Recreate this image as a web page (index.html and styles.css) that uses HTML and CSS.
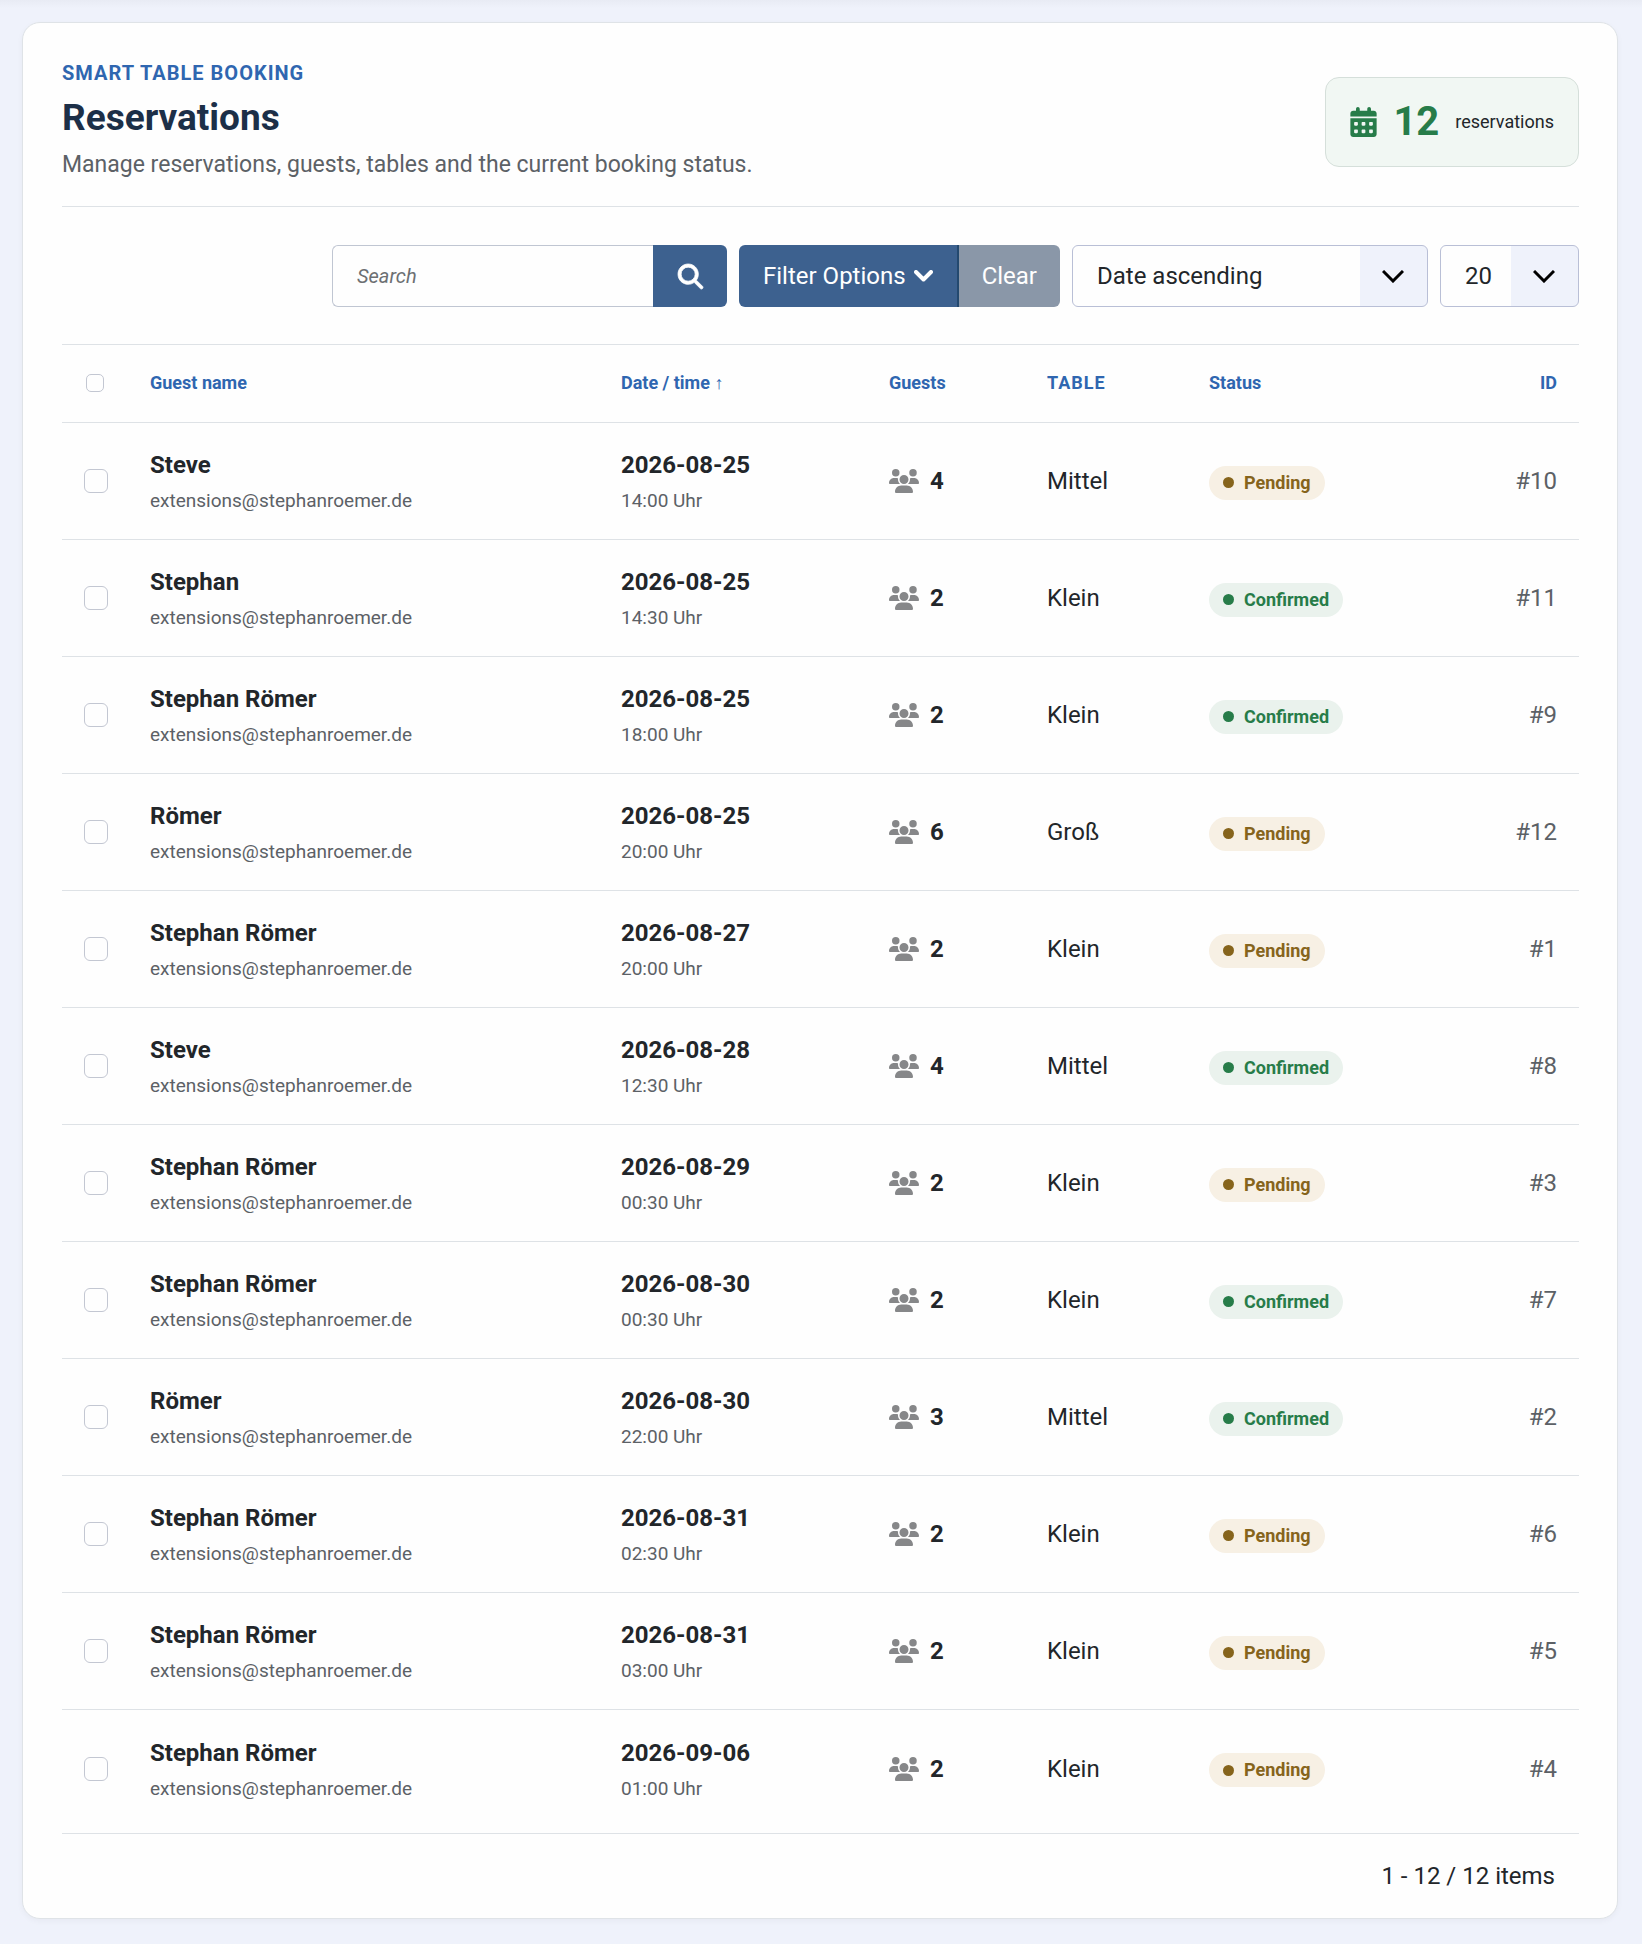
FILE: index.html
```html
<!DOCTYPE html>
<html lang="en">
<head>
<meta charset="UTF-8" />
<meta name="viewport" content="width=device-width, initial-scale=1" />
<title>Smart Table Booking - Reservations</title>
<link rel="stylesheet" href="styles.css">
</head>
<body>
<svg class="sprite" aria-hidden="true">
  <symbol id="icon-users" viewBox="0 0 640 512">
    <path d="M144 0a80 80 0 1 1 0 160A80 80 0 1 1 144 0zM512 0a80 80 0 1 1 0 160A80 80 0 1 1 512 0zM0 298.7C0 239.8 47.8 192 106.7 192h42.7c15.9 0 31 3.5 44.6 9.7c-1.3 7.2-1.9 14.7-1.9 22.3c0 38.2 16.8 72.5 43.3 96c-.2 0-.4 0-.7 0H21.3C9.6 320 0 310.4 0 298.7zM405.3 320c-.2 0-.4 0-.7 0c26.6-23.5 43.3-57.8 43.3-96c0-7.6-.7-15-1.9-22.3c13.6-6.3 28.7-9.7 44.6-9.7h42.7C592.2 192 640 239.8 640 298.7c0 11.8-9.6 21.3-21.3 21.3H405.3zM224 224a96 96 0 1 1 192 0 96 96 0 1 1 -192 0zM128 485.3C128 411.7 187.7 352 261.3 352H378.7C452.3 352 512 411.7 512 485.3c0 14.7-11.9 26.7-26.7 26.7H154.7c-14.7 0-26.7-11.9-26.7-26.7z"/>
  </symbol>
</svg>

<main class="card">
  <header class="page-head">
    <div>
      <p class="eyebrow">Smart Table Booking</p>
      <h1>Reservations</h1>
      <p class="lead">Manage reservations, guests, tables and the current booking status.</p>
    </div>
    <div class="total">
      <svg class="total-icon" viewBox="0 0 448 512" aria-hidden="true"><path d="M128 0c17.7 0 32 14.3 32 32V64H288V32c0-17.7 14.3-32 32-32s32 14.3 32 32V64h48c26.5 0 48 21.5 48 48v48H0V112C0 85.5 21.5 64 48 64H96V32c0-17.7 14.3-32 32-32zM0 192H448V464c0 26.5-21.5 48-48 48H48c-26.5 0-48-21.5-48-48V192zm64 80v32c0 8.8 7.2 16 16 16h32c8.8 0 16-7.2 16-16V272c0-8.8-7.2-16-16-16H80c-8.8 0-16 7.2-16 16zm128 0v32c0 8.8 7.2 16 16 16h32c8.8 0 16-7.2 16-16V272c0-8.8-7.2-16-16-16H208c-8.8 0-16 7.2-16 16zm144-16c-8.8 0-16 7.2-16 16v32c0 8.8 7.2 16 16 16h32c8.8 0 16-7.2 16-16V272c0-8.8-7.2-16-16-16H336zM64 400v32c0 8.8 7.2 16 16 16h32c8.8 0 16-7.2 16-16V400c0-8.8-7.2-16-16-16H80c-8.8 0-16 7.2-16 16zm144-16c-8.8 0-16 7.2-16 16v32c0 8.8 7.2 16 16 16h32c8.8 0 16-7.2 16-16V400c0-8.8-7.2-16-16-16H208zm112 16v32c0 8.8 7.2 16 16 16h32c8.8 0 16-7.2 16-16V400c0-8.8-7.2-16-16-16H336c-8.8 0-16 7.2-16 16z"/></svg>
      <strong>12</strong>
      <span>reservations</span>
    </div>
  </header>

  <form class="toolbar">
    <div class="group">
      <input class="search" type="text" placeholder="Search" aria-label="Search">
      <button class="btn search-btn" type="submit" aria-label="Search">
        <svg class="search-icon" viewBox="0 0 512 512" aria-hidden="true"><path d="M416 208c0 45.9-14.9 88.3-40 122.7L502.6 457.4c12.5 12.5 12.5 32.8 0 45.3s-32.8 12.5-45.3 0L330.7 376c-34.4 25.2-76.8 40-122.7 40C93.1 416 0 322.9 0 208S93.1 0 208 0S416 93.1 416 208zM208 352a144 144 0 1 0 0-288 144 144 0 1 0 0 288z"/></svg>
      </button>
    </div>
    <div class="group">
      <button class="btn filter-btn" type="button">Filter Options
        <svg class="caret" viewBox="0 0 19 12" aria-hidden="true"><path d="M2 2l7.5 7.5L17 2"/></svg>
      </button>
      <button class="btn clear-btn" type="button">Clear</button>
    </div>
    <select class="select sort" aria-label="Sort by">
      <option>Date ascending</option>
      <option>Date descending</option>
    </select>
    <select class="select limit" aria-label="Items per page">
      <option>20</option>
      <option>50</option>
    </select>
  </form>

  <table class="bookings">
    <colgroup>
      <col class="col-check">
      <col>
      <col class="col-date">
      <col class="col-guests">
      <col class="col-table">
      <col class="col-status">
      <col class="col-id">
    </colgroup>
    <thead>
      <tr>
        <th><input class="check check-all" type="checkbox" aria-label="Select all"></th>
        <th><a href="#">Guest name</a></th>
        <th><a href="#">Date / time <span class="arrow">↑</span></a></th>
        <th><a href="#">Guests</a></th>
        <th class="upper">Table</th>
        <th><a href="#">Status</a></th>
        <th class="id"><a href="#">ID</a></th>
      </tr>
    </thead>
    <tbody>
      <tr>
        <td><input class="check" type="checkbox" aria-label="Select 10"></td>
        <td><div class="main">Steve</div><div class="sub">extensions@stephanroemer.de</div></td>
        <td><div class="main">2026-08-25</div><div class="sub">14:00 Uhr</div></td>
        <td><div class="guests"><svg><use href="#icon-users"/></svg>4</div></td>
        <td>Mittel</td>
        <td><span class="badge pending">Pending</span></td>
        <td class="id">#10</td>
      </tr>
      <tr>
        <td><input class="check" type="checkbox" aria-label="Select 11"></td>
        <td><div class="main">Stephan</div><div class="sub">extensions@stephanroemer.de</div></td>
        <td><div class="main">2026-08-25</div><div class="sub">14:30 Uhr</div></td>
        <td><div class="guests"><svg><use href="#icon-users"/></svg>2</div></td>
        <td>Klein</td>
        <td><span class="badge confirmed">Confirmed</span></td>
        <td class="id">#11</td>
      </tr>
      <tr>
        <td><input class="check" type="checkbox" aria-label="Select 9"></td>
        <td><div class="main">Stephan Römer</div><div class="sub">extensions@stephanroemer.de</div></td>
        <td><div class="main">2026-08-25</div><div class="sub">18:00 Uhr</div></td>
        <td><div class="guests"><svg><use href="#icon-users"/></svg>2</div></td>
        <td>Klein</td>
        <td><span class="badge confirmed">Confirmed</span></td>
        <td class="id">#9</td>
      </tr>
      <tr>
        <td><input class="check" type="checkbox" aria-label="Select 12"></td>
        <td><div class="main">Römer</div><div class="sub">extensions@stephanroemer.de</div></td>
        <td><div class="main">2026-08-25</div><div class="sub">20:00 Uhr</div></td>
        <td><div class="guests"><svg><use href="#icon-users"/></svg>6</div></td>
        <td>Groß</td>
        <td><span class="badge pending">Pending</span></td>
        <td class="id">#12</td>
      </tr>
      <tr>
        <td><input class="check" type="checkbox" aria-label="Select 1"></td>
        <td><div class="main">Stephan Römer</div><div class="sub">extensions@stephanroemer.de</div></td>
        <td><div class="main">2026-08-27</div><div class="sub">20:00 Uhr</div></td>
        <td><div class="guests"><svg><use href="#icon-users"/></svg>2</div></td>
        <td>Klein</td>
        <td><span class="badge pending">Pending</span></td>
        <td class="id">#1</td>
      </tr>
      <tr>
        <td><input class="check" type="checkbox" aria-label="Select 8"></td>
        <td><div class="main">Steve</div><div class="sub">extensions@stephanroemer.de</div></td>
        <td><div class="main">2026-08-28</div><div class="sub">12:30 Uhr</div></td>
        <td><div class="guests"><svg><use href="#icon-users"/></svg>4</div></td>
        <td>Mittel</td>
        <td><span class="badge confirmed">Confirmed</span></td>
        <td class="id">#8</td>
      </tr>
      <tr>
        <td><input class="check" type="checkbox" aria-label="Select 3"></td>
        <td><div class="main">Stephan Römer</div><div class="sub">extensions@stephanroemer.de</div></td>
        <td><div class="main">2026-08-29</div><div class="sub">00:30 Uhr</div></td>
        <td><div class="guests"><svg><use href="#icon-users"/></svg>2</div></td>
        <td>Klein</td>
        <td><span class="badge pending">Pending</span></td>
        <td class="id">#3</td>
      </tr>
      <tr>
        <td><input class="check" type="checkbox" aria-label="Select 7"></td>
        <td><div class="main">Stephan Römer</div><div class="sub">extensions@stephanroemer.de</div></td>
        <td><div class="main">2026-08-30</div><div class="sub">00:30 Uhr</div></td>
        <td><div class="guests"><svg><use href="#icon-users"/></svg>2</div></td>
        <td>Klein</td>
        <td><span class="badge confirmed">Confirmed</span></td>
        <td class="id">#7</td>
      </tr>
      <tr>
        <td><input class="check" type="checkbox" aria-label="Select 2"></td>
        <td><div class="main">Römer</div><div class="sub">extensions@stephanroemer.de</div></td>
        <td><div class="main">2026-08-30</div><div class="sub">22:00 Uhr</div></td>
        <td><div class="guests"><svg><use href="#icon-users"/></svg>3</div></td>
        <td>Mittel</td>
        <td><span class="badge confirmed">Confirmed</span></td>
        <td class="id">#2</td>
      </tr>
      <tr>
        <td><input class="check" type="checkbox" aria-label="Select 6"></td>
        <td><div class="main">Stephan Römer</div><div class="sub">extensions@stephanroemer.de</div></td>
        <td><div class="main">2026-08-31</div><div class="sub">02:30 Uhr</div></td>
        <td><div class="guests"><svg><use href="#icon-users"/></svg>2</div></td>
        <td>Klein</td>
        <td><span class="badge pending">Pending</span></td>
        <td class="id">#6</td>
      </tr>
      <tr>
        <td><input class="check" type="checkbox" aria-label="Select 5"></td>
        <td><div class="main">Stephan Römer</div><div class="sub">extensions@stephanroemer.de</div></td>
        <td><div class="main">2026-08-31</div><div class="sub">03:00 Uhr</div></td>
        <td><div class="guests"><svg><use href="#icon-users"/></svg>2</div></td>
        <td>Klein</td>
        <td><span class="badge pending">Pending</span></td>
        <td class="id">#5</td>
      </tr>
      <tr>
        <td><input class="check" type="checkbox" aria-label="Select 4"></td>
        <td><div class="main">Stephan Römer</div><div class="sub">extensions@stephanroemer.de</div></td>
        <td><div class="main">2026-09-06</div><div class="sub">01:00 Uhr</div></td>
        <td><div class="guests"><svg><use href="#icon-users"/></svg>2</div></td>
        <td>Klein</td>
        <td><span class="badge pending">Pending</span></td>
        <td class="id">#4</td>
      </tr>
    </tbody>
  </table>

  <footer class="pager">1 - 12 / 12 items</footer>
</main>
</body>
</html>
```

FILE: styles.css
```css
* { box-sizing: border-box; }
body {
  margin: 0;
  padding: 22px 24px 26px 22px;
  background: linear-gradient(#e8ebf4, #eff2fb 8px) #eff2fb;
  font-family: Roboto, "Liberation Sans", sans-serif;
  font-size: 24px;
  line-height: 36px;
  color: #22262a;
}
h1, p { margin: 0; }
a { color: inherit; text-decoration: none; }
.sprite { display: none; }

.card {
  padding: 38px 38px 24px 39px;
  background: #fefefe;
  border: 1px solid #dfe3e7;
  border-radius: 18px;
  box-shadow: 0 2px 6px rgba(0,0,0,0.04);
}

/* Header */
.page-head {
  display: flex;
  align-items: center;
  justify-content: space-between;
  padding-bottom: 24px;
  border-bottom: 1px solid #dee2e6;
}
.eyebrow {
  font-size: 20px;
  line-height: 24px;
  font-weight: 700;
  letter-spacing: 1px;
  text-transform: uppercase;
  color: #2f66b0;
}
h1 {
  margin: 11px 0 8px;
  font-size: 37px;
  line-height: 44px;
  font-weight: 700;
  color: #1c2f48;
}
.lead {
  font-size: 23px;
  line-height: 34px;
  color: #5c6166;
}
.total {
  display: flex;
  align-items: center;
  gap: 16px;
  height: 90px;
  padding: 0 24px;
  background: #f1f7f3;
  border: 1px solid #d5dfda;
  border-radius: 14px;
  font-size: 18px;
}
.total-icon { width: 27px; height: 30px; fill: #277c49; }
.total strong { font-size: 40px; color: #277c49; }

/* Search tools */
.toolbar {
  display: flex;
  justify-content: flex-end;
  gap: 12px;
  padding: 38px 0 37px;
}
.group { display: flex; }
.search, .btn, .select {
  height: 62px;
  font-family: inherit;
  font-size: 24px;
  color: #22262a;
  border-radius: 6px;
}
.search {
  width: 321px;
  padding: 0 24px;
  font-size: 20px;
  background: #fefefe;
  border: 1px solid #c0c6d2;
  border-right: 0;
  border-radius: 6px 0 0 6px;
}
.search::placeholder { font-style: italic; color: #6c6f72; }
.btn {
  display: flex;
  align-items: center;
  justify-content: center;
  gap: 8px;
  padding: 0 24px;
  border: 0;
  background: #3d618f;
  color: #fff;
  cursor: pointer;
}
.search-btn { width: 74px; border-radius: 0 6px 6px 0; }
.search-icon { width: 25px; height: 25px; fill: #fff; stroke: #fff; stroke-width: 16; overflow: visible; flex: none; }
.filter-btn { border-right: 2px solid #24496f; border-radius: 6px 0 0 6px; }
.caret { width: 19px; height: 12px; fill: none; stroke: #fff; stroke-width: 4; stroke-linecap: round; stroke-linejoin: round; }
.clear-btn { padding: 0 23px; background: #8a97a8; border-radius: 0 6px 6px 0; }
.select {
  appearance: none;
  padding: 0 24px;
  border: 1px solid #b9bfd6;
  background:
    url("data:image/svg+xml,%3Csvg xmlns='http://www.w3.org/2000/svg' width='22' height='13' viewBox='0 0 22 13' fill='none' stroke='%23000' stroke-width='3'%3E%3Cpath d='M1 1l10 10L21 1'/%3E%3C/svg%3E") right 23px center no-repeat,
    linear-gradient(#eff2fb, #eff2fb) right / 67px 100% no-repeat,
    #fefefe;
}
.sort { width: 356px; }
.limit { width: 139px; }

/* Table */
.bookings {
  width: 100%;
  table-layout: fixed;
  border-collapse: separate;
  border-spacing: 0;
}
.col-check { width: 66px; }
.col-date { width: 268px; }
.col-guests { width: 158px; }
.col-table { width: 162px; }
.col-status { width: 240px; }
.col-id { width: 152px; }
.bookings th, .bookings td {
  padding: 0 22px;
  text-align: left;
  vertical-align: middle;
  border-bottom: 1px solid #dee2e6;
}
.bookings th {
  height: 79px;
  padding-bottom: 2px;
  border-top: 1px solid #dee2e6;
  font-size: 18px;
  font-weight: 700;
  color: #2f66b0;
}
.bookings td { height: 117px; }
.bookings tr:last-child td { border-bottom: 0; }
.bookings .upper { text-transform: uppercase; letter-spacing: 1px; }
.bookings .id { text-align: right; }
.arrow { font-family: "Liberation Sans", sans-serif; font-weight: 400; }
td.id { color: #5c6166; }
.check {
  appearance: none;
  display: block;
  width: 24px;
  height: 24px;
  margin: 0 auto;
  background: #fefefe;
  border: 1px solid #c3c7d2;
  border-radius: 6px;
}
.check-all { width: 18px; height: 18px; border-radius: 5px; }
.main { font-weight: 700; }
.sub { margin-top: 4px; font-size: 19px; line-height: 28px; color: #5c6166; }
.guests { display: flex; align-items: center; gap: 11px; font-weight: 700; }
.guests svg { width: 30px; height: 24px; fill: #868789; }
.badge {
  display: inline-flex;
  align-items: center;
  gap: 10px;
  height: 34px;
  padding: 0 14px;
  border-radius: 17px;
  font-size: 18px;
  font-weight: 700;
}
.badge::before {
  content: "";
  width: 11px;
  height: 11px;
  border-radius: 50%;
  background: currentColor;
}
.pending { background: #f7f0e4; color: #86641c; }
.confirmed { background: #eaf2ed; color: #277c49; }

.pager {
  margin-top: 6px;
  padding: 24px 24px 0;
  border-top: 1px solid #dee2e6;
  text-align: right;
}
```
